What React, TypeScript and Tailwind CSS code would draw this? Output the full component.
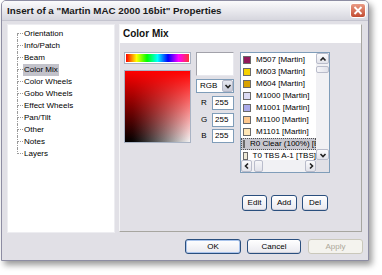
import React from 'react';

const treeItems = [
  'Orientation',
  'Info/Patch',
  'Beam',
  'Color Mix',
  'Color Wheels',
  'Gobo Wheels',
  'Effect Wheels',
  'Pan/Tilt',
  'Other',
  'Notes',
  'Layers',
];

const colors = [
  { name: 'M507 [Martin]', swatch: 'bg-[#93195a]' },
  { name: 'M603 [Martin]', swatch: 'bg-[#f6d200]' },
  { name: 'M604 [Martin]', swatch: 'bg-[#d8a200]' },
  { name: 'M1000 [Martin]', swatch: 'bg-[#dcdcf4]' },
  { name: 'M1001 [Martin]', swatch: 'bg-[#ababea]' },
  { name: 'M1100 [Martin]', swatch: 'bg-[#ffc98f]' },
  { name: 'M1101 [Martin]', swatch: 'bg-[#ffe7b6]' },
  { name: 'R0 Clear (100%) [Rosco]', swatch: 'bg-white', selected: true },
  { name: 'T0 TBS A-1 [TBS]', swatch: 'bg-[#efead6]' },
];

function Chevron({ dir }: { dir: 'up' | 'down' | 'left' | 'right' }) {
  const d = {
    up: 'M1.5 5.5 L4 3 L6.5 5.5',
    down: 'M1.5 3 L4 5.5 L6.5 3',
    left: 'M5 1.5 L2.5 4 L5 6.5',
    right: 'M3 1.5 L5.5 4 L3 6.5',
  }[dir];
  return (
    <svg width="8" height="8" viewBox="0 0 8 8">
      <path d={d} fill="none" stroke="#222" strokeWidth="1.6" />
    </svg>
  );
}

function ScrollBtn({ dir, className = '' }: { dir: 'up' | 'down' | 'left' | 'right'; className?: string }) {
  return (
    <div className={`flex items-center justify-center rounded-[2px] border border-[#b9bccb] bg-linear-to-b from-[#fbfbfd] to-[#e2e3ea] ${className}`}>
      <Chevron dir={dir} />
    </div>
  );
}

function XpButton({ label, className = '', disabled = false, isDefault = false }: { label: string; className?: string; disabled?: boolean; isDefault?: boolean }) {
  if (disabled) {
    return (
      <div className={`flex items-center justify-center rounded-[3px] border border-[#cac8bb] bg-[#f4f3ee] text-[#aca899] ${className}`}>
        {label}
      </div>
    );
  }
  return (
    <div
      className={`flex items-center justify-center rounded-[3px] border border-[#2a4f7e] bg-linear-to-b from-[#ffffff] to-[#e9e9ef] text-black ${
        isDefault ? 'shadow-[inset_0_0_0_1px_#aac4ec]' : 'shadow-[inset_0_-1px_0_#cfd0da]'
      } ${className}`}
    >
      {label}
    </div>
  );
}

export default function App() {
  return (
    <div className="w-[382px] h-[275px] bg-white pl-px font-['Liberation_Sans',Arial,sans-serif] text-[8px] leading-none text-black">
      <div className="w-[368px] h-[261px] flex flex-col border border-[#8d8da3] rounded-t-[5px] bg-[#e1e0e6] shadow-[3px_4px_6px_rgba(0,0,0,0.4)]">
        {/* title bar */}
        <div className="h-[20px] flex items-center pl-[5px] pr-[2px] rounded-t-[4px] bg-linear-to-b from-[#fbfbfc] via-[#e9e9ee] to-[#d6d6de] border-b border-[#c4c4cf]">
          <span className="flex-1 font-bold text-[9.8px] text-[#1a1a1a]">Insert of a "Martin MAC 2000 16bit" Properties</span>
          <div className="w-[16px] h-[15px] rounded-[3px] border border-white bg-linear-to-b from-[#e99b86] to-[#c24a30] flex items-center justify-center">
            <svg width="10" height="9" viewBox="0 0 10 9">
              <path d="M1.5 1 L8.5 8 M8.5 1 L1.5 8" stroke="white" strokeWidth="1.9" />
            </svg>
          </div>
        </div>

        {/* body */}
        <div className="flex-1 flex flex-col px-[5px] pt-[3px]">
          <div className="flex gap-[4px] h-[209px]">
            {/* tree */}
            <div className="w-[108px] h-full bg-white border border-[#ededf1] pt-[3px] pl-[9px]">
              {treeItems.map((item, i) => {
                const first = i === 0;
                const last = i === treeItems.length - 1;
                return (
                  <div key={item} className="h-[12px] flex items-stretch">
                    <div className="w-[6px] flex flex-col">
                      <div className={`h-[6px] border-b border-dotted border-[#9a9a9a] ${first ? '' : 'border-l'}`} />
                      <div className={`flex-1 border-dotted border-[#9a9a9a] ${last ? '' : 'border-l'}`} />
                    </div>
                    <div className="flex items-center">
                      <span className={`px-px h-[12px] flex items-center ${item === 'Color Mix' ? 'bg-[#c2c2ca]' : ''}`}>{item}</span>
                    </div>
                  </div>
                );
              })}
            </div>

            {/* panel */}
            <div className="w-[243px] h-[208px] flex flex-col border border-t-[#f4f4f6] border-l-[#f4f4f6] border-r-[#a7a6a0] border-b-[#a7a6a0]">
              <div className="h-[18px] bg-white flex items-center pl-[3px]">
                <span className="font-bold text-[10px] text-[#111]">Color Mix</span>
              </div>
              <div className="flex pl-[4px] pt-[9px] gap-[5px]">
                {/* col 1 */}
                <div className="w-[67px] flex flex-col gap-[6px]">
                  <div className="h-[12px] border border-[#a9b3c4] p-px bg-white">
                    <div className="h-full bg-[linear-gradient(to_right,#f00,#ff0,#0f0,#0ff,#00f,#f0f,#f33)]" />
                  </div>
                  <div className="h-[73px] border border-[#a9b3c4] bg-linear-to-r from-black to-[#f4f4f4]">
                    <div className="h-full bg-linear-to-b from-[#ff0000] to-transparent" />
                  </div>
                </div>

                {/* col 2 */}
                <div className="w-[38px] flex flex-col">
                  <div className="h-[24px] bg-white border border-[#a2a2aa] border-r-[#e8e8ee] border-b-[#e8e8ee]" />
                  <div className="mt-[3px] h-[14px] flex items-center bg-white border border-[#7f9db9] pl-[3px]">
                    <span className="flex-1">RGB</span>
                    <div className="w-[11px] h-[12px] flex items-center justify-center rounded-[2px] border border-[#b5b8c8] bg-linear-to-b from-[#e6e8f0] to-[#c7cad8]">
                      <Chevron dir="down" />
                    </div>
                  </div>
                  {['R', 'G', 'B'].map((c, i) => (
                    <div key={c} className={`${i === 2 ? 'mt-[2px]' : 'mt-[3px]'} h-[14px] flex items-center`}>
                      <span className="w-[16px] text-center">{c}</span>
                      <div className="w-[22px] h-[14px] bg-white border border-[#7f9db9] flex items-center pl-[2px]">255</div>
                    </div>
                  ))}
                </div>

                {/* col 3 */}
                <div className="w-[90px] ml-px flex flex-col">
                  <div className="h-[121px] border border-[#7f9db9] bg-white flex flex-col">
                    <div className="h-[107px] flex">
                      <div className="flex-1 overflow-hidden pt-px">
                        {colors.map((c) => (
                          <div
                            key={c.name}
                            className={`h-[12px] flex items-center pl-[2px] whitespace-nowrap ${
                              c.selected ? 'bg-[#c7c7cf] outline outline-dotted outline-[#555] -outline-offset-1' : ''
                            }`}
                          >
                            <div className={`w-[8px] h-[8px] border border-[#6a6a6a] ${c.swatch}`} />
                            <span className="ml-[5px]">{c.name}</span>
                          </div>
                        ))}
                      </div>
                      <div className="w-[13px] flex flex-col bg-[#f1f1f4]">
                        <ScrollBtn dir="up" className="h-[11px]" />
                        <div className="mt-[2px] h-[7px] rounded-[2px] border border-[#b9bccb] bg-linear-to-r from-[#f6f6f9] to-[#e1e2ea]" />
                        <div className="flex-1" />
                        <ScrollBtn dir="down" className="h-[11px]" />
                      </div>
                    </div>
                    <div className="flex-1 flex bg-[#f1f1f4]">
                      <ScrollBtn dir="left" className="w-[11px]" />
                      <div className="ml-[2px] w-[9px] rounded-[2px] border border-[#b9bccb] bg-linear-to-b from-[#f6f6f9] to-[#e1e2ea]" />
                      <div className="flex-1" />
                      <ScrollBtn dir="right" className="w-[11px]" />
                      <div className="w-[13px] bg-[#e1e0e6]" />
                    </div>
                  </div>
                  <div className="mt-[22px] flex justify-center gap-[4px]">
                    <XpButton label="Edit" className="w-[25px] h-[16px]" />
                    <XpButton label="Add" className="w-[26px] h-[16px]" />
                    <XpButton label="Del" className="w-[26px] h-[16px] ml-px" />
                  </div>
                </div>
              </div>
            </div>
          </div>

          {/* dialog buttons */}
          <div className="mt-[6px] flex gap-[6px] pl-[178px]">
            <XpButton label="OK" isDefault className="w-[56px] h-[15px]" />
            <XpButton label="Cancel" className="w-[54px] h-[15px]" />
            <XpButton label="Apply" disabled className="w-[55px] h-[15px] ml-px" />
          </div>
        </div>
      </div>
    </div>
  );
}
